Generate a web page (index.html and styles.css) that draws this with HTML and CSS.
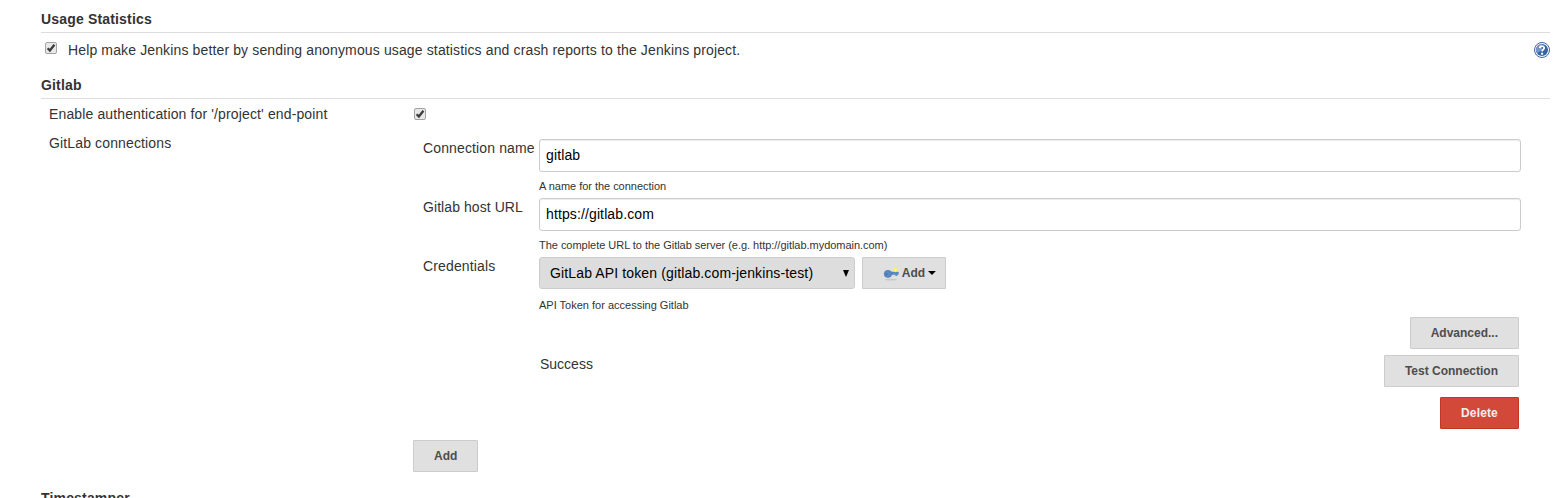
FILE: index.html
```
<!DOCTYPE html>
<html lang="en">
<head>
<meta charset="utf-8">
<title>Configure System [Jenkins]</title>
<link rel="stylesheet" href="styles.css">
</head>
<body>
<main class="config">
  <h2 class="section-header">Usage Statistics</h2>
  <div class="usage-row">
    <svg class="check" viewBox="0 0 12 12" role="img" aria-label="Checked"><rect class="check-box" x=".5" y=".5" width="11" height="11" rx="1.5"/><path class="check-mark" d="M2.6 6.2 4.9 8.5 9.4 2.8"/></svg>
    <span class="usage-label">Help make Jenkins better by sending anonymous usage statistics and crash reports to the Jenkins project.</span>
    <svg class="help" viewBox="0 0 16 16" role="img" aria-label="Help"><circle cx="8" cy="8" r="7.5" fill="#fff" stroke="#3b65a3" stroke-width="1"/><circle cx="8" cy="8" r="6" fill="#3465a4"/><path d="M3 11.5A6 6 0 0 1 8 2v6z" fill="#7295c4"/><path d="M5.8 6.1C5.9 3.4 10.3 3.5 10.2 6 10.1 7.6 8.2 7.5 8.1 9.4" fill="none" stroke="#fff" stroke-width="1.8"/><path d="M7.1 10.7h2v2h-2z" fill="#fff"/></svg>
  </div>
  <h2 class="section-header">Gitlab</h2>
  <div class="row auth-row">
    <span class="name">Enable authentication for '/project' end-point</span>
    <svg class="check" viewBox="0 0 12 12" role="img" aria-label="Checked"><rect class="check-box" x=".5" y=".5" width="11" height="11" rx="1.5"/><path class="check-mark" d="M2.6 6.2 4.9 8.5 9.4 2.8"/></svg>
  </div>
  <div class="row">
    <span class="name connections-name">GitLab connections</span>
    <div class="connections">
      <div class="field">
        <label class="field-name" for="conn">Connection name</label>
        <div class="setting"><input class="text-input" id="conn" type="text" value="gitlab"><p class="hint">A name for the connection</p></div>
      </div>
      <div class="field">
        <label class="field-name host-name" for="host">Gitlab host URL</label>
        <div class="setting"><input class="text-input" id="host" type="text" value="https://gitlab.com"><p class="hint">The complete URL to the Gitlab server (e.g. http://gitlab.mydomain.com)</p></div>
      </div>
      <div class="field">
        <span class="field-name">Credentials</span>
        <div class="setting">
          <div class="credentials">
            <div class="select"><span>GitLab API token (gitlab.com-jenkins-test)</span><svg class="arrow" viewBox="0 0 6 7"><path d="M0 0h6L3 7z"/></svg></div>
            <button class="button add-key"><svg class="key" viewBox="0 0 16 16"><ellipse cx="8" cy="14.8" rx="6" ry=".9" fill="#c8c8c8"/><path d="M7 7h8.500v2.600h-1.200v1h-1.500v-1H7z" fill="#5d8dc5" stroke="#4474b1" stroke-width=".5"/><ellipse cx="5" cy="8.900" rx="3.800" ry="3.600" fill="#5b8ac3" stroke="#4574b1" stroke-width=".6"/><circle cx="3.500" cy="9.200" r=".9" fill="#3f6ca5"/><circle cx="12.600" cy="4.700" r="2.500" fill="#f3ec6c"/><circle cx="12.600" cy="4.700" r="1.200" fill="#fff78a"/></svg><span>Add</span><svg class="caret" viewBox="0 0 8 4"><path d="M0 0h8L4 4z"/></svg></button>
          </div>
          <p class="hint credentials-hint">API Token for accessing Gitlab</p>
        </div>
      </div>
      <div class="actions"><button class="button">Advanced...</button></div>
      <div class="actions test"><span class="status">Success</span><button class="button">Test Connection</button></div>
      <div class="actions"><button class="button danger">Delete</button></div>
      <button class="button add">Add</button>
    </div>
  </div>
  <h2 class="section-header">Timestamper</h2>
</main>
</body>
</html>
```
FILE: styles.css
```
* { box-sizing: border-box; }
html { height: 100%; overflow: hidden; }
body {
  height: 100%;
  margin: 0;
  overflow: hidden;
  background: #fff;
  color: #333;
  font: 14px/20px "Liberation Sans", Arial, sans-serif;
  letter-spacing: .134px;
}
.config { margin: 0 17px 0 41px; }
.section-header {
  height: 33px;
  margin: 0;
  padding-top: 9px;
  border-bottom: 1px solid #ddd;
  font-size: 14px;
  font-weight: bold;
  letter-spacing: .17px;
}
.usage-row { display: flex; height: 33px; padding: 7px 0 0 4px; }
.usage-label { margin-left: 11px; }
.check { width: 12px; height: 12px; flex: none; display: block; }
.usage-row .check { margin-top: 2px; }
.check-box { fill: #e8e8e8; stroke: #a3a3a3; }
.check-mark { fill: none; stroke: #3c3c3c; stroke-width: 2.3; }
.help { width: 16px; height: 16px; margin: 2px 0 0 auto; }
.row { display: flex; padding-left: 8px; }
.name { width: 364px; flex: none; }
.auth-row { height: 30px; padding-top: 5px; }
.auth-row .check { margin: 4px 0 0 1px; }
.connections-name { padding-top: 4px; }
.connections { width: 1108px; padding-top: 10px; height: 350px; }
.field { display: flex; padding-left: 10px; height: 59px; }
.field-name { width: 116px; flex: none; margin-top: -1px; white-space: nowrap; }
.host-name { letter-spacing: .07px; }
.setting { flex: 1; }
.text-input {
  display: block;
  width: 100%;
  height: 33px;
  padding: 0 6px 2px;
  border: 1px solid #ccc;
  border-radius: 3px;
  box-shadow: inset 0 1px 1px rgba(0, 0, 0, .075);
  color: #000;
  font: inherit;
  letter-spacing: .12px;
}
.hint { margin: 4px 0 0; font-size: 11px; letter-spacing: -.03px; }
.credentials { display: flex; gap: 7px; }
.select {
  display: flex;
  align-items: center;
  justify-content: space-between;
  width: 316px;
  height: 32px;
  padding: 0 5px 0 10px;
  border: 1px solid #ccc;
  border-radius: 3px;
  background: #ddd;
  color: #000;
}
.arrow { width: 6px; height: 7px; }
.credentials-hint { margin-top: 6px; letter-spacing: 0; }
.button {
  height: 32px;
  padding: 0 20px;
  border: 1px solid #ccc;
  border-radius: 1px;
  background: #e0e0e0;
  color: #4d4d4d;
  font: bold 12px/20px "Liberation Sans", Arial, sans-serif;
  letter-spacing: 0;
}
.add-key { display: flex; align-items: center; width: 84px; padding: 0 9px 0 20px; }
.key { width: 16px; height: 16px; margin-right: 3px; }
.caret { width: 8px; height: 4px; margin-left: 3px; fill: #000; }
.actions { display: flex; justify-content: flex-end; padding: 1px 2px 0 127px; }
.test { margin: 5px 0 9px; }
.status { margin: -1px auto 0 0; letter-spacing: 0; }
.danger { width: 79px; background: #d24939; border-color: #c33626; color: #eee; letter-spacing: .15px; }
.add { display: block; margin-top: 11px; }
```
